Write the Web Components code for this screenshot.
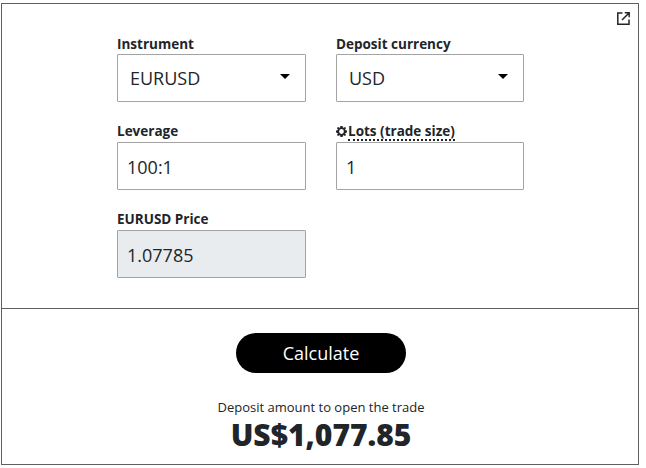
<!DOCTYPE html>
<html>
<head>
<meta charset="utf-8">
<title>Margin calculator</title>
<style>
  html, body { margin: 0; background: #fff; }
  body { font-family: "Open Sans", sans-serif; color: #212529; }
</style>
</head>
<body>
<calc-widget>
  <calc-field slot="fields" label="Instrument" value="EURUSD" type="select"></calc-field>
  <calc-field slot="fields" label="Deposit currency" value="USD" type="select"></calc-field>
  <calc-field slot="fields" label="Leverage" value="100:1"></calc-field>
  <calc-field slot="fields" label="Lots (trade size)" value="1" hint></calc-field>
  <calc-field slot="fields" label="EURUSD Price" value="1.07785" type="readonly"></calc-field>
  <calc-result slot="result" label="Deposit amount to open the trade" value="US$1,077.85"></calc-result>
</calc-widget>

<script>
class CalcField extends HTMLElement {
  constructor() {
    super();
    this.attachShadow({ mode: "open" });
  }

  connectedCallback() {
    const type = this.getAttribute("type") || "input";
    const gear = this.hasAttribute("hint") ? `
      <svg class="gear" viewBox="0 0 12 12" width="11" height="11">
        <path fill-rule="evenodd" fill="#212529" d="M4.800 0h2.400l.3 1.600.9.4L9.800 1 11 2.200 10 3.600l.4.9 1.600.3v2.400l-1.600.3-.4.9 1 1.400L9.800 11l-1.400-1-.9.4-.3 1.600H4.800l-.3-1.600-.9-.4-1.400 1L1 9.800l1-1.400-.4-.9L0 7.200V4.800l1.600-.3.4-.9-1-1.400L2.200 1l1.400 1 .9-.4zM6 3.400a2.600 2.600 0 1 0 0 5.200 2.600 2.600 0 0 0 0-5.200z"/>
      </svg>` : "";
    const arrow = type === "select" ? `
      <svg class="arrow" viewBox="0 0 10 5" width="10" height="5"><path fill="#000" d="M0 0h10L5 5z"/></svg>` : "";
    this.shadowRoot.innerHTML = `
      <style>
        :host { display: block; }
        .label {
          display: flex;
          align-items: center;
          height: 19px;
          padding-bottom: 1px;
          font-size: 13.5px;
          font-weight: 700;
          line-height: 19px;
          color: #212529;
          white-space: nowrap;
        }
        .label.first { height: 20px; padding-bottom: 0; }
        .label span.hint { border-bottom: 2px dotted #212529; line-height: 15px; margin-top: 2px; }
        .gear { margin-right: 1px; flex: none; }
        .box {
          box-sizing: border-box;
          display: flex;
          align-items: center;
          justify-content: space-between;
          height: 48px;
          border: 1px solid #a3a3a3;
          border-radius: 1px;
          padding: 2px 15px 0 9px;
          font-size: 18px;
          color: #212529;
          background: #fff;
        }
        .select { padding: 0 15px 0 12px; }
        .readonly { background: #e9ecef; }
        .arrow { margin-top: -3px; }
      </style>
      <div class="label ${type === "select" ? "first" : ""}">${gear}<span class="${gear ? "hint" : ""}">${this.getAttribute("label")}</span></div>
      <div class="box ${type}"><span>${this.getAttribute("value")}</span>${arrow}</div>
    `;
  }
}

class CalcResult extends HTMLElement {
  constructor() {
    super();
    this.attachShadow({ mode: "open" });
  }

  connectedCallback() {
    this.shadowRoot.innerHTML = `
      <style>
        :host { display: block; text-align: center; color: #212529; }
        .label { font-size: 13px; line-height: 18px; }
        .value { font-size: 30px; font-weight: 800; line-height: 38px; white-space: nowrap; }
      </style>
      <div class="label">${this.getAttribute("label")}</div>
      <div class="value">${this.getAttribute("value")}</div>
    `;
  }
}

class CalcWidget extends HTMLElement {
  constructor() {
    super();
    this.attachShadow({ mode: "open" });
    this.shadowRoot.innerHTML = `
      <style>
        :host { display: block; width: 646px; height: 468px; box-sizing: border-box; padding: 3px 7px 3px 1px; }
        .frame {
          position: relative;
          box-sizing: border-box;
          height: 100%;
          border: 1px solid #5f5f5f;
          display: flex;
          flex-direction: column;
        }
        .top {
          box-sizing: border-box;
          height: 305px;
          flex: none;
          border-bottom: 1px solid #5f5f5f;
          padding: 30px 0 0 115px;
        }
        .grid {
          display: grid;
          grid-template-columns: 189px 188px;
          column-gap: 30px;
          row-gap: 20px;
        }
        .open {
          position: absolute;
          top: 8px;
          right: 8px;
          display: block;
        }
        .bottom {
          flex: 1;
          display: flex;
          flex-direction: column;
          align-items: center;
          padding: 24px 0 0 2px;
        }
        button {
          width: 170px;
          height: 40px;
          border: 0;
          border-radius: 20px;
          background: #000;
          color: #fff;
          font-family: inherit;
          font-size: 18px;
          padding: 0;
        }
        .result { margin-top: 25px; }
      </style>
      <div class="frame">
        <svg class="open" viewBox="0 0 13 13" width="13" height="13" fill="none" stroke="#212529" stroke-width="1.500">
          <path d="M5.500 1H.8v11.200H12V7.500"/>
          <path d="M5 8 12 1M7.800 .8h4.400v4.400"/>
        </svg>
        <div class="top">
          <div class="grid"><slot name="fields"></slot></div>
        </div>
        <div class="bottom">
          <button>Calculate</button>
          <div class="result"><slot name="result"></slot></div>
        </div>
      </div>
    `;
  }
}

customElements.define("calc-field", CalcField);
customElements.define("calc-result", CalcResult);
customElements.define("calc-widget", CalcWidget);
</script>
</body>
</html>
